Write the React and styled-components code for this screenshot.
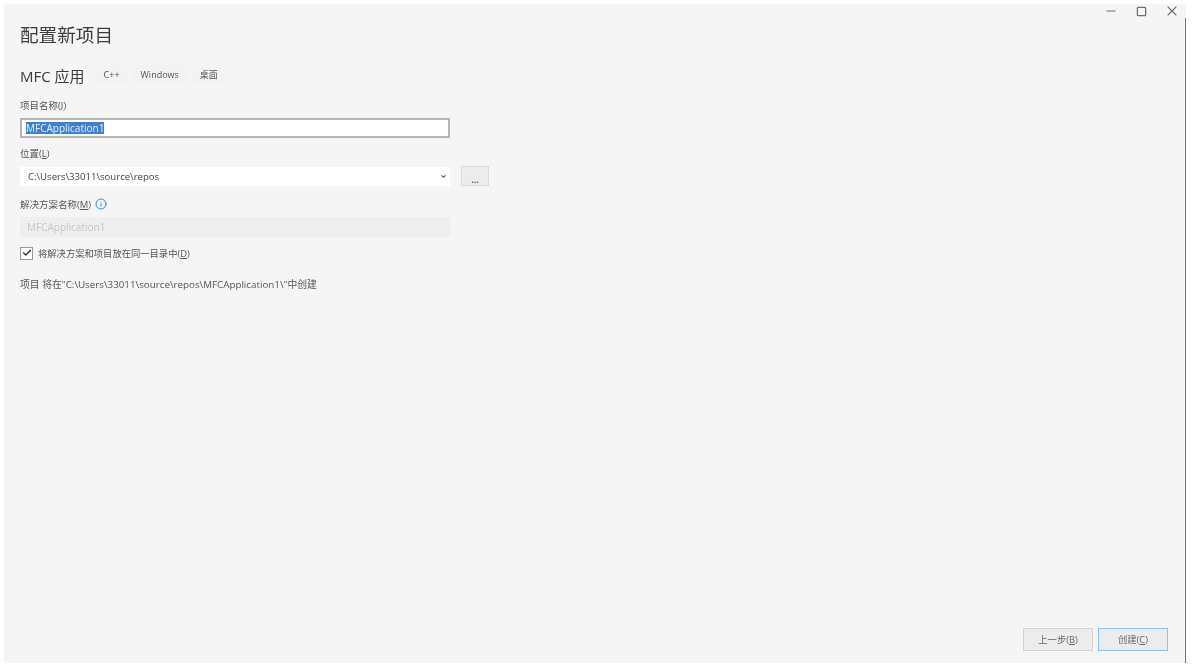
import React from "react";
import styled, { createGlobalStyle } from "styled-components";
import { Check, ChevronDown, Info, Minus, Square, X } from "lucide-react";

const GlobalStyle = createGlobalStyle`
    html, body {
        margin: 0;
        height: 100%;
        background: #ffffff;
    }
    body {
        font-family: "Open Sans", "Noto Sans CJK SC", sans-serif;
        color: #3a3a3a;
    }
`;

const App = () => {
    return (
        <>
            <GlobalStyle />
            <Page>
                <Dialog>
                    <WindowControls>
                        <ControlButton><Minus size={14} strokeWidth={1.8} /></ControlButton>
                        <ControlButton><Square size={11} strokeWidth={2.8} /></ControlButton>
                        <ControlButton><X size={16} strokeWidth={1.7} /></ControlButton>
                    </WindowControls>

                    <Title>配置新项目</Title>

                    <TemplateRow>
                        <TemplateName>MFC 应用</TemplateName>
                        <Tag>C++</Tag>
                        <Tag>Windows</Tag>
                        <Tag>桌面</Tag>
                    </TemplateRow>

                    <FieldLabel top={12}>项目名称(<u>J</u>)</FieldLabel>
                    <NameInput>
                        <Selected>MFCApplication1</Selected>
                    </NameInput>

                    <FieldLabel top={8}>位置(<u>L</u>)</FieldLabel>
                    <LocationRow>
                        <LocationSelect>
                            C:\Users\33011\source\repos
                            <ChevronDown size={7} strokeWidth={4} color="#666" />
                        </LocationSelect>
                        <BrowseButton>...</BrowseButton>
                    </LocationRow>

                    <FieldLabel top={11}>
                        解决方案名称(<u>M</u>)
                        <InfoIcon size={12} color="#1f7fc4" strokeWidth={1.8} />
                    </FieldLabel>
                    <DisabledInput>MFCApplication1</DisabledInput>

                    <CheckRow>
                        <CheckBox><Check size={10} strokeWidth={3.5} color="#333" /></CheckBox>
                        将解决方案和项目放在同一目录中(<u>D</u>)
                    </CheckRow>

                    <PathNote>项目 将在"C:\Users\33011\source\repos\MFCApplication1\"中创建</PathNote>

                    <Footer>
                        <FooterButton>上一步(<u>B</u>)</FooterButton>
                        <FooterButton primary>创建(<u>C</u>)</FooterButton>
                    </Footer>
                </Dialog>
            </Page>
        </>
    );
};

export default App;

const Page = styled.div`
    width: 1194px;
    height: 668px;
    padding: 4px 8px 5px 4px;
    box-sizing: border-box;
    overflow: hidden;
`;

// the reference is a soft, upscaled capture, hence the slight blur
const Dialog = styled.div`
    position: relative;
    height: 100%;
    box-sizing: border-box;
    padding: 18px 18px 12px 16px;
    background: #f5f5f6;
    filter: blur(0.45px);
    display: flex;
    flex-direction: column;
    align-items: flex-start;

    &::after {
        content: "";
        position: absolute;
        top: 14px;
        bottom: 0;
        right: 0;
        width: 1px;
        background: #77777a;
    }
`;

const WindowControls = styled.div`
    position: absolute;
    top: 0;
    right: -1px;
    display: flex;
`;

const ControlButton = styled.div`
    width: 30.5px;
    height: 14px;
    display: flex;
    align-items: center;
    justify-content: center;
    color: #6f6f6f;
`;

const Title = styled.h1`
    margin: 0;
    height: 26px;
    font-size: 18.6px;
    line-height: 26px;
    font-weight: 400;
    color: #3c3c3c;
`;

const TemplateRow = styled.div`
    margin-top: 16px;
    height: 22px;
    display: flex;
    align-items: center;
`;

const TemplateName = styled.span`
    font-size: 15px;
    color: #3c3c3c;
    margin-right: 12px;
`;

const Tag = styled.span`
    height: 20px;
    line-height: 20px;
    padding: 0 7px;
    margin-right: 7px;
    font-size: 9px;
    color: #555;
    background: #f3f3f4;
`;

const FieldLabel = styled.label`
    display: flex;
    align-items: center;
    height: 14px;
    margin-top: ${(props) => props.top}px;
    font-size: 9.5px;
    color: #555;
`;

const InfoIcon = styled(Info)`
    margin-left: 4px;
`;

const NameInput = styled.div`
    width: 430px;
    height: 20px;
    margin-top: 6px;
    box-sizing: border-box;
    padding: 2px 4px;
    background: #fff;
    border: 2px solid #b5b5b5;
    display: flex;
    align-items: center;
`;

const Selected = styled.span`
    font-size: 10px;
    line-height: 12px;
    color: #e8f0fa;
    background: #3f80cf;
`;

const LocationRow = styled.div`
    margin-top: 6px;
    display: flex;
    align-items: center;
    gap: 11px;
`;

const LocationSelect = styled.div`
    width: 430px;
    height: 19px;
    box-sizing: border-box;
    padding: 0 3px 0 8px;
    background: #fff;
    font-size: 9.6px;
    color: #444;
    display: flex;
    align-items: center;
    justify-content: space-between;
`;

const BrowseButton = styled.div`
    width: 28px;
    height: 20px;
    box-sizing: border-box;
    border: 1px solid #dcdcde;
    background: #ececee;
    font-size: 9px;
    font-weight: 700;
    line-height: 25px;
    text-align: center;
    color: #555;
`;

const DisabledInput = styled.div`
    width: 430px;
    height: 20px;
    margin-top: 6px;
    box-sizing: border-box;
    padding: 0 7px;
    background: #eeeeef;
    font-size: 10px;
    line-height: 20px;
    color: #c6c6c6;
`;

const CheckRow = styled.div`
    margin-top: 9px;
    height: 14px;
    display: flex;
    align-items: center;
    font-size: 9.3px;
    color: #555;
`;

const CheckBox = styled.span`
    width: 13px;
    height: 13px;
    margin-right: 5px;
    box-sizing: border-box;
    background: #fff;
    border: 1px solid #999;
    display: flex;
    align-items: center;
    justify-content: center;
`;

const PathNote = styled.div`
    margin-top: 18px;
    font-size: 9.8px;
    line-height: 14px;
    color: #555;
`;

const Footer = styled.div`
    margin-top: auto;
    align-self: flex-end;
    display: flex;
    gap: 5px;
`;

const FooterButton = styled.div`
    width: 70px;
    height: 23px;
    box-sizing: border-box;
    border: 1px solid ${(props) => (props.primary ? "#8fc1ea" : "#d4d4d6")};
    background: #ececee;
    font-size: 9.3px;
    line-height: 21px;
    text-align: center;
    color: #666;
`;
